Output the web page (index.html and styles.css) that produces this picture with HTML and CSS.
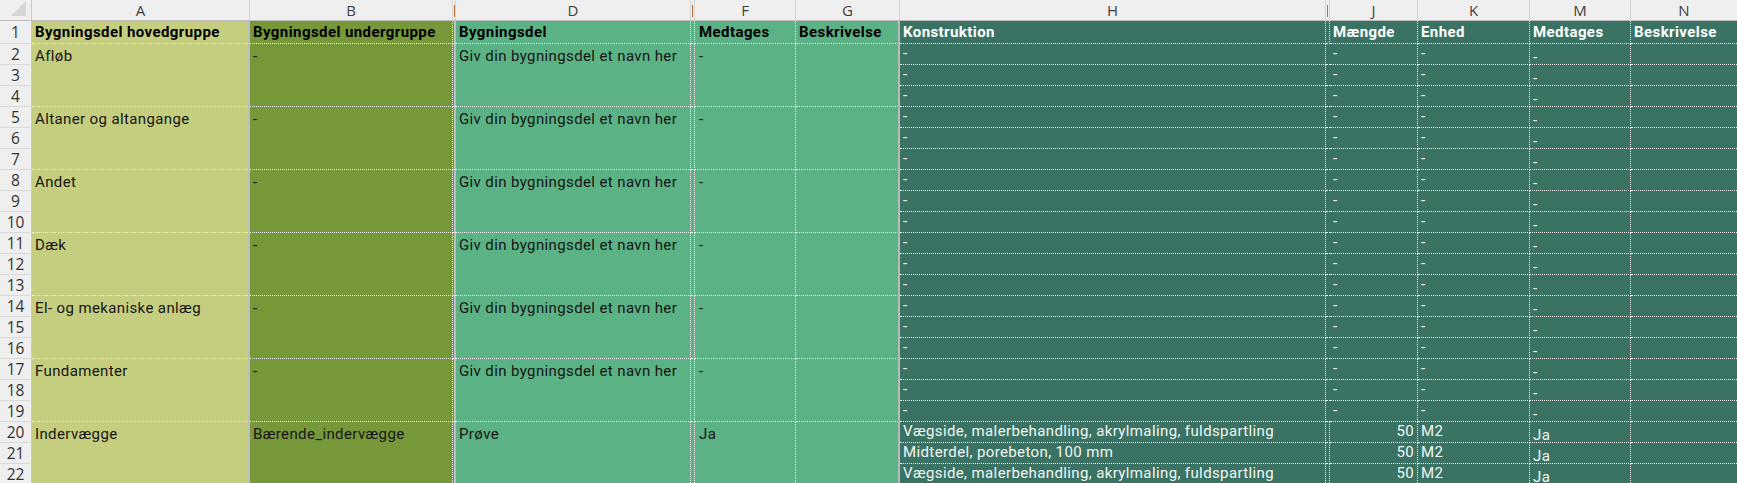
FILE: index.html
```html
<!DOCTYPE html>
<html lang="da">
<head>
<meta charset="utf-8">
<title>Bygningsdele</title>
<link rel="stylesheet" href="styles.css">
</head>
<body>
<div class="sheet">
  <div class="cols colhdr">
    <div class="corner"><svg width="16" height="16" viewBox="0 0 16 16"><polygon points="15,0 15,15 0,15" fill="#d6d6d6"/></svg></div>
    <div class="ch ch-a">A</div>
    <div class="ch ch-b">B</div>
    <div class="ch ch-hid"><span class="clip"></span></div>
    <div class="ch">D</div>
    <div class="ch ch-hid"><span class="clip"></span></div>
    <div class="ch">F</div>
    <div class="ch">G</div>
    <div class="line">
      <div class="ch">H</div>
      <div class="ch ch-hid"><span class="clip"></span></div>
      <div class="ch">J</div>
      <div class="ch">K</div>
      <div class="ch">M</div>
      <div class="ch last">N</div>
    </div>
  </div>

  <div class="cols row1">
    <div class="rn"><span>1</span></div>
    <div class="c a th">Bygningsdel hovedgruppe</div>
    <div class="c b th">Bygningsdel undergruppe</div>
    <div class="c cc"></div>
    <div class="c d th">Bygningsdel</div>
    <div class="c e"></div>
    <div class="c f th">Medtages</div>
    <div class="c g th">Beskrivelse</div>
    <div class="line">
      <div class="t h th">Konstruktion</div>
      <div class="t i iv"></div>
      <div class="t j th jl">Mængde</div>
      <div class="t k th">Enhed</div>
      <div class="t m th mh">Medtages</div>
      <div class="t n th">Beskrivelse</div>
    </div>
  </div>

  <div class="cols group">
    <div class="rns"><span>2</span><span>3</span><span>4</span></div>
    <div class="c a">Afløb</div>
    <div class="c b">-</div>
    <div class="c cc"></div>
    <div class="c d">Giv din bygningsdel et navn her</div>
    <div class="c e"></div>
    <div class="c f">-</div>
    <div class="c g"></div>
    <div class="lines">
      <div class="line"><div class="t h">-</div><div class="t i"></div><div class="t j">-</div><div class="t k">-</div><div class="t m">-</div><div class="t n"></div></div>
      <div class="line"><div class="t h">-</div><div class="t i"></div><div class="t j">-</div><div class="t k">-</div><div class="t m">-</div><div class="t n"></div></div>
      <div class="line"><div class="t h">-</div><div class="t i"></div><div class="t j">-</div><div class="t k">-</div><div class="t m">-</div><div class="t n"></div></div>
    </div>
  </div>

  <div class="cols group">
    <div class="rns"><span>5</span><span>6</span><span>7</span></div>
    <div class="c a">Altaner og altangange</div>
    <div class="c b">-</div>
    <div class="c cc"></div>
    <div class="c d">Giv din bygningsdel et navn her</div>
    <div class="c e"></div>
    <div class="c f">-</div>
    <div class="c g"></div>
    <div class="lines">
      <div class="line"><div class="t h">-</div><div class="t i"></div><div class="t j">-</div><div class="t k">-</div><div class="t m">-</div><div class="t n"></div></div>
      <div class="line"><div class="t h">-</div><div class="t i"></div><div class="t j">-</div><div class="t k">-</div><div class="t m">-</div><div class="t n"></div></div>
      <div class="line"><div class="t h">-</div><div class="t i"></div><div class="t j">-</div><div class="t k">-</div><div class="t m">-</div><div class="t n"></div></div>
    </div>
  </div>

  <div class="cols group">
    <div class="rns"><span>8</span><span>9</span><span>10</span></div>
    <div class="c a">Andet</div>
    <div class="c b">-</div>
    <div class="c cc"></div>
    <div class="c d">Giv din bygningsdel et navn her</div>
    <div class="c e"></div>
    <div class="c f">-</div>
    <div class="c g"></div>
    <div class="lines">
      <div class="line"><div class="t h">-</div><div class="t i"></div><div class="t j">-</div><div class="t k">-</div><div class="t m">-</div><div class="t n"></div></div>
      <div class="line"><div class="t h">-</div><div class="t i"></div><div class="t j">-</div><div class="t k">-</div><div class="t m">-</div><div class="t n"></div></div>
      <div class="line"><div class="t h">-</div><div class="t i"></div><div class="t j">-</div><div class="t k">-</div><div class="t m">-</div><div class="t n"></div></div>
    </div>
  </div>

  <div class="cols group">
    <div class="rns"><span>11</span><span>12</span><span>13</span></div>
    <div class="c a">Dæk</div>
    <div class="c b">-</div>
    <div class="c cc"></div>
    <div class="c d">Giv din bygningsdel et navn her</div>
    <div class="c e"></div>
    <div class="c f">-</div>
    <div class="c g"></div>
    <div class="lines">
      <div class="line"><div class="t h">-</div><div class="t i"></div><div class="t j">-</div><div class="t k">-</div><div class="t m">-</div><div class="t n"></div></div>
      <div class="line"><div class="t h">-</div><div class="t i"></div><div class="t j">-</div><div class="t k">-</div><div class="t m">-</div><div class="t n"></div></div>
      <div class="line"><div class="t h">-</div><div class="t i"></div><div class="t j">-</div><div class="t k">-</div><div class="t m">-</div><div class="t n"></div></div>
    </div>
  </div>

  <div class="cols group">
    <div class="rns"><span>14</span><span>15</span><span>16</span></div>
    <div class="c a">El- og mekaniske anlæg</div>
    <div class="c b">-</div>
    <div class="c cc"></div>
    <div class="c d">Giv din bygningsdel et navn her</div>
    <div class="c e"></div>
    <div class="c f">-</div>
    <div class="c g"></div>
    <div class="lines">
      <div class="line"><div class="t h">-</div><div class="t i"></div><div class="t j">-</div><div class="t k">-</div><div class="t m">-</div><div class="t n"></div></div>
      <div class="line"><div class="t h">-</div><div class="t i"></div><div class="t j">-</div><div class="t k">-</div><div class="t m">-</div><div class="t n"></div></div>
      <div class="line"><div class="t h">-</div><div class="t i"></div><div class="t j">-</div><div class="t k">-</div><div class="t m">-</div><div class="t n"></div></div>
    </div>
  </div>

  <div class="cols group">
    <div class="rns"><span>17</span><span>18</span><span>19</span></div>
    <div class="c a">Fundamenter</div>
    <div class="c b">-</div>
    <div class="c cc"></div>
    <div class="c d">Giv din bygningsdel et navn her</div>
    <div class="c e"></div>
    <div class="c f">-</div>
    <div class="c g"></div>
    <div class="lines">
      <div class="line"><div class="t h">-</div><div class="t i"></div><div class="t j">-</div><div class="t k">-</div><div class="t m">-</div><div class="t n"></div></div>
      <div class="line"><div class="t h">-</div><div class="t i"></div><div class="t j">-</div><div class="t k">-</div><div class="t m">-</div><div class="t n"></div></div>
      <div class="line"><div class="t h">-</div><div class="t i"></div><div class="t j">-</div><div class="t k">-</div><div class="t m">-</div><div class="t n"></div></div>
    </div>
  </div>

  <div class="cols group">
    <div class="rns"><span>20</span><span>21</span><span>22</span></div>
    <div class="c a">Indervægge</div>
    <div class="c b">Bærende_indervægge</div>
    <div class="c cc"></div>
    <div class="c d">Prøve</div>
    <div class="c e"></div>
    <div class="c f">Ja</div>
    <div class="c g"></div>
    <div class="lines">
      <div class="line"><div class="t h">Vægside, malerbehandling, akrylmaling, fuldspartling</div><div class="t i iv"></div><div class="t j num jl">50</div><div class="t k">M2</div><div class="t m">Ja</div><div class="t n"></div></div>
      <div class="line"><div class="t h">Midterdel, porebeton, 100 mm</div><div class="t i iv"></div><div class="t j num jl">50</div><div class="t k">M2</div><div class="t m">Ja</div><div class="t n"></div></div>
      <div class="line"><div class="t h">Vægside, malerbehandling, akrylmaling, fuldspartling</div><div class="t i iv"></div><div class="t j num jl">50</div><div class="t k">M2</div><div class="t m">Ja</div><div class="t n"></div></div>
    </div>
  </div>
</div>
</body>
</html>
```

FILE: styles.css
```css
html, body {
  margin: 0;
  padding: 0;
  background: #ffffff;
  overflow: hidden;
}

.sheet {
  width: 1737px;
  display: flex;
  flex-direction: column;
  font-family: "Roboto", "Liberation Sans", sans-serif;
  font-size: 15px;
  letter-spacing: 0.38px;
}

.cols {
  display: grid;
  grid-template-columns: 32px 218px 203px 3px 235px 4px 101px 104px 1fr;
}

.line {
  display: grid;
  grid-template-columns: 426px 4px 88px 112px 101px 1fr;
  height: 21px;
}

/* column header bar */
.colhdr {
  height: 21px;
  background: #efefef;
  border-bottom: 1px solid #bdbdbd;
  box-sizing: border-box;
  font-family: "Open Sans", "Liberation Sans", sans-serif;
  font-size: 15px;
  letter-spacing: 0;
  color: #404040;
}
.colhdr .line { height: 20px; }

.corner {
  display: flex;
  align-items: flex-end;
  justify-content: flex-end;
  padding: 0 4px 3px 0;
  border-right: 1px solid #c8c8c8;
}

.ch {
  display: flex;
  align-items: center;
  justify-content: center;
  border-right: 1px solid #d6d6d6;
  line-height: 20px;
}
.ch.last { border-right: 0; }
.ch-hid {
  justify-content: flex-start;
  padding-top: 1px;
}
.clip {
  width: 1px;
  height: 12px;
  margin-left: 1px;
  background: #b36e3a;
}

/* row numbers */
.rn, .rns {
  background: #efefef;
  border-right: 1px solid #c8c8c8;
  font-family: "Open Sans", "Liberation Sans", sans-serif;
  font-size: 15.5px;
  letter-spacing: 0;
  color: #333;
  display: flex;
  flex-direction: column;
}
.rn span, .rns span {
  height: 21px;
  box-sizing: border-box;
  border-bottom: 1px solid #d9d9d9;
  display: flex;
  align-items: center;
  justify-content: center;
}
.rn span { height: 23px; }

/* rows */
.row1 { height: 23px; }
.group { height: 63px; }

.c, .t {
  box-sizing: border-box;
  border-bottom: 1px dotted #f2f2f2;
  white-space: nowrap;
  overflow: hidden;
}

.c {
  padding: 3px 3px 0;
  line-height: 18px;
  color: #151515;
}

.a { background: #c5cd7f; border-right: 2px solid #bdbdbd; }
.b { background: #769839; border-right: 1px dotted #f2f2f2; }
.cc {
  padding: 0;
  background: linear-gradient(to right, #769839 1px, #bfbfbf 1px);
}
.d { background: #5bb284; border-right: 1px dotted #f2f2f2; }
.e { background: #5bb284; border-right: 1px dotted #f2f2f2; padding: 0; }
.f { background: #5bb284; border-right: 1px dotted #f2f2f2; padding-left: 4px; }
.g { background: #5bb284; border-right: 2px solid #b9b9b9; }

.lines {
  display: flex;
  flex-direction: column;
}

.t {
  background: #3a7363;
  color: #f1f6f4;
  padding: 0 3px;
  line-height: 18px;
  border-right: 1px dotted #f2f2f2;
}
.t.i { padding: 0; }
.t.n { border-right: 0; }
.t.m { padding-top: 4px; }
.t.num { text-align: right; }

/* header row 1 */
.th {
  font-weight: 700;
  letter-spacing: 0.42px;
  padding-top: 2px;
  line-height: 19px;
}
.c.th { color: #000; }
.t.th { color: #fff; }
.t.mh { padding-top: 2px; }
.row1 .t { height: 23px; }
.row1 .c { border-bottom-color: #f2f2f2; }
.jl { border-left: 0; }
.iv { border-right: 1px dotted #f2f2f2; }
.group .t.i:not(.iv) { border-right: 0; }
```
